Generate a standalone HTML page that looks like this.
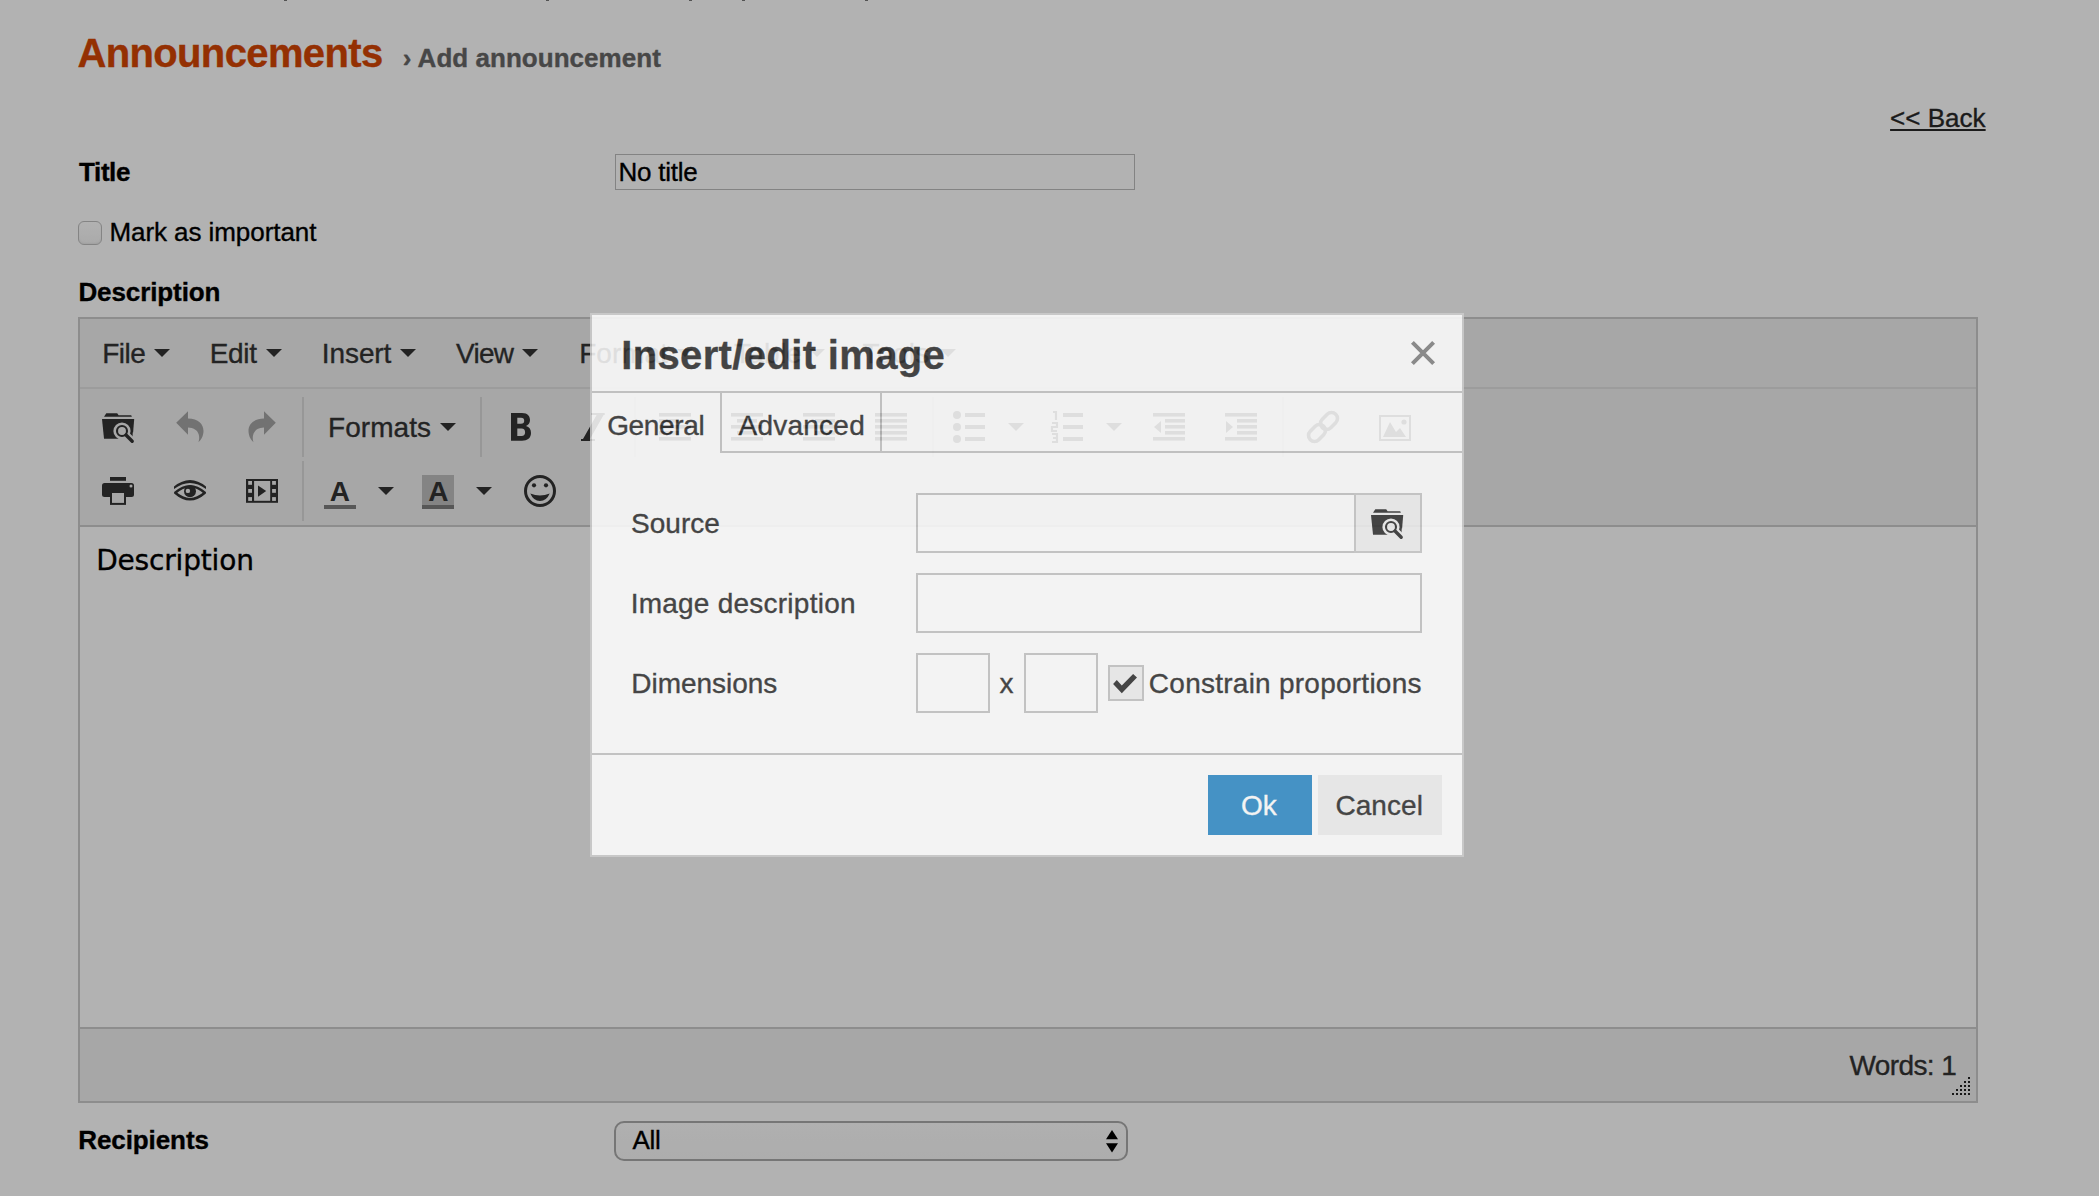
<!DOCTYPE html>
<html lang="en"><head><meta charset="utf-8"><title>Announcements - Add announcement</title>
<style>
html,body{margin:0;padding:0}
body{width:2099px;height:1196px;overflow:hidden;background:#fff;position:relative;font-family:"Liberation Sans",sans-serif}
.t{position:absolute;white-space:nowrap;margin:0;-webkit-text-stroke:0.35px currentColor}
.b{position:absolute;box-sizing:border-box}
.i{position:absolute;overflow:visible}
#page,#overlay{position:absolute;left:0;top:0;width:2099px;height:1196px}
#overlay{background:rgba(0,0,0,0.3)}
#dlg{position:absolute;left:590px;top:313px;width:874px;height:544px;box-sizing:border-box;border:2px solid #ccc;background:#fff;opacity:0.85;}
</style></head>
<body>
<div id="page">
<div class="b" style="left:284px;top:0px;width:3px;height:1px;background:#777;"></div>
<div class="b" style="left:546px;top:0px;width:3px;height:1px;background:#777;"></div>
<div class="b" style="left:689px;top:0px;width:3px;height:1px;background:#777;"></div>
<div class="b" style="left:742px;top:0px;width:3px;height:1px;background:#777;"></div>
<div class="b" style="left:865px;top:0px;width:3px;height:1px;background:#777;"></div>
<div class="b" style="left:615px;top:154px;width:520px;height:36px;border:1px solid #bcbcbc;background:#fff;"></div>
<div class="b" style="left:78px;top:221px;width:24px;height:24px;border:1.5px solid #bdbdbd;border-radius:6px;background:linear-gradient(#fff,#f3f3f3);box-shadow:inset 0 -1px 2px rgba(0,0,0,0.06);"></div>
<div class="b" style="left:78px;top:317px;width:1900px;height:786px;border:2px solid #cbcbcb;background:#fff;"></div>
<div class="b" style="left:80px;top:319px;width:1896px;height:68px;background:#f0f0f0;"></div>
<div class="b" style="left:80px;top:387px;width:1896px;height:2px;background:#e0e0e0;"></div>
<div class="b" style="left:80px;top:389px;width:1896px;height:136px;background:#f0f0f0;"></div>
<div class="b" style="left:80px;top:525px;width:1896px;height:2px;background:#cbcbcb;"></div>
<div class="b" style="left:80px;top:1027px;width:1896px;height:2px;background:#cbcbcb;"></div>
<div class="b" style="left:80px;top:1029px;width:1896px;height:72px;background:#f0f0f0;"></div>
<div class="b" style="left:302px;top:397px;width:2px;height:60px;background:#d9d9d9;"></div>
<div class="b" style="left:302px;top:461px;width:2px;height:60px;background:#d9d9d9;"></div>
<div class="b" style="left:480px;top:397px;width:2px;height:60px;background:#d9d9d9;"></div>
<div class="b" style="left:634px;top:397px;width:2px;height:60px;background:#d9d9d9;"></div>
<div class="b" style="left:932px;top:397px;width:2px;height:60px;background:#d9d9d9;"></div>
<div class="b" style="left:1282px;top:397px;width:2px;height:60px;background:#d9d9d9;"></div>
<svg class="i" style="left:154px;top:349px" width="16" height="8" viewBox="0 0 16 8" ><polygon points="0,0 16,0 8,8" fill="#333"/></svg>
<svg class="i" style="left:266px;top:349px" width="16" height="8" viewBox="0 0 16 8" ><polygon points="0,0 16,0 8,8" fill="#333"/></svg>
<svg class="i" style="left:400px;top:349px" width="16" height="8" viewBox="0 0 16 8" ><polygon points="0,0 16,0 8,8" fill="#333"/></svg>
<svg class="i" style="left:522px;top:349px" width="16" height="8" viewBox="0 0 16 8" ><polygon points="0,0 16,0 8,8" fill="#333"/></svg>
<svg class="i" style="left:677px;top:349px" width="16" height="8" viewBox="0 0 16 8" ><polygon points="0,0 16,0 8,8" fill="#333"/></svg>
<svg class="i" style="left:809px;top:349px" width="16" height="8" viewBox="0 0 16 8" ><polygon points="0,0 16,0 8,8" fill="#333"/></svg>
<svg class="i" style="left:940px;top:349px" width="16" height="8" viewBox="0 0 16 8" ><polygon points="0,0 16,0 8,8" fill="#333"/></svg>
<svg class="i" style="left:102px;top:411px" width="32" height="32" viewBox="0 0 32 32" ><path fill="#333" d="M2,5.7 L4.3,2.2 H15.2 L16.6,4.3 H29.2 L29.9,5.7 Z"/><path fill="#333" d="M0,8 H32.2 L30.6,27.7 H2 Z"/><circle cx="20" cy="20" r="8.6" fill="#f0f0f0"/><path d="M24,24 L31,31" stroke="#f0f0f0" stroke-width="7.5" stroke-linecap="round"/><rect x="30.7" y="21.5" width="3" height="12" fill="#f0f0f0"/><circle cx="20" cy="20" r="5" fill="none" stroke="#333" stroke-width="2.1"/><path d="M24,24 L30.2,30.2" stroke="#333" stroke-width="3.4" stroke-linecap="round"/></svg>
<svg class="i" style="left:174px;top:411px" width="32" height="32" viewBox="0 0 32 32" ><path fill="#333" opacity="0.4" d="M2.2,11.8 L14,0.3 V7.6 C24.5,7.6 29.5,13.5 29.5,20 C29.5,25 27,29 24.5,31.2 C26.5,26 25,16.8 14,16.6 V23.8 Z"/></svg>
<svg class="i" style="left:246px;top:411px" width="32" height="32" viewBox="0 0 32 32" ><g transform="translate(32,0) scale(-1,1)"><path fill="#333" opacity="0.4" d="M2.2,11.8 L14,0.3 V7.6 C24.5,7.6 29.5,13.5 29.5,20 C29.5,25 27,29 24.5,31.2 C26.5,26 25,16.8 14,16.6 V23.8 Z"/></g></svg>
<svg class="i" style="left:440px;top:423px" width="16" height="8" viewBox="0 0 16 8" ><polygon points="0,0 16,0 8,8" fill="#333"/></svg>
<svg class="i" style="left:510.7px;top:413.3px" width="20" height="28" viewBox="0 0 20 28" ><path fill="#333" fill-rule="evenodd" d="M0,0 H11 C17,0 19,3.5 19,7 C19,10 17.5,12 15,13 C18.5,14 20,16.5 20,20 C20,25 16.5,27.7 11,27.7 H0 Z M6.3,4.7 V10.8 H10 C12.3,10.8 13.2,9.5 13.2,7.7 C13.2,5.8 12.3,4.7 10,4.7 Z M6.3,15.5 V23 H10.5 C13,23 14.1,21.5 14.1,19.2 C14.1,16.9 13,15.5 10.5,15.5 Z"/></svg>
<svg class="i" style="left:577px;top:411px" width="32" height="32" viewBox="0 0 32 32" ><path fill="#333" d="M14,2 H27.7 V4 H26.6 L13,28 H18 V30 H4 V28 H6 L19.6,4 H14 Z"/></svg>
<svg class="i" style="left:659px;top:411px" width="32" height="32" viewBox="0 0 32 32" ><rect x="0" y="2" width="32" height="3.6" fill="#333"/><rect x="0" y="8" width="20" height="3.6" fill="#333"/><rect x="0" y="14" width="32" height="3.6" fill="#333"/><rect x="0" y="20" width="20" height="3.6" fill="#333"/><rect x="0" y="26" width="32" height="3.6" fill="#333"/></svg>
<svg class="i" style="left:731px;top:411px" width="32" height="32" viewBox="0 0 32 32" ><rect x="0.0" y="2" width="32" height="3.6" fill="#333"/><rect x="6.0" y="8" width="20" height="3.6" fill="#333"/><rect x="0.0" y="14" width="32" height="3.6" fill="#333"/><rect x="6.0" y="20" width="20" height="3.6" fill="#333"/><rect x="0.0" y="26" width="32" height="3.6" fill="#333"/></svg>
<svg class="i" style="left:803px;top:411px" width="32" height="32" viewBox="0 0 32 32" ><rect x="0" y="2" width="32" height="3.6" fill="#333"/><rect x="12" y="8" width="20" height="3.6" fill="#333"/><rect x="0" y="14" width="32" height="3.6" fill="#333"/><rect x="12" y="20" width="20" height="3.6" fill="#333"/><rect x="0" y="26" width="32" height="3.6" fill="#333"/></svg>
<svg class="i" style="left:875px;top:411px" width="32" height="32" viewBox="0 0 32 32" ><rect x="0" y="2" width="32" height="3.6" fill="#333"/><rect x="0" y="8" width="32" height="3.6" fill="#333"/><rect x="0" y="14" width="32" height="3.6" fill="#333"/><rect x="0" y="20" width="32" height="3.6" fill="#333"/><rect x="0" y="26" width="32" height="3.6" fill="#333"/></svg>
<svg class="i" style="left:953px;top:411px" width="32" height="32" viewBox="0 0 32 32" ><circle cx="4" cy="4" r="4" fill="#333"/><rect x="12" y="2" width="20" height="4" fill="#333"/><circle cx="4" cy="16" r="4" fill="#333"/><rect x="12" y="14" width="20" height="4" fill="#333"/><circle cx="4" cy="28" r="4" fill="#333"/><rect x="12" y="26" width="20" height="4" fill="#333"/></svg>
<svg class="i" style="left:1008px;top:423px" width="16" height="8" viewBox="0 0 16 8" ><polygon points="0,0 16,0 8,8" fill="#333"/></svg>
<svg class="i" style="left:1051px;top:411px" width="32" height="32" viewBox="0 0 32 32" ><rect x="12" y="2" width="20" height="4" fill="#333"/><rect x="12" y="14" width="20" height="4" fill="#333"/><rect x="12" y="26" width="20" height="4" fill="#333"/><path d="M2,1 H5 V9 M1,12 H6 V16 H1 V20 H6 M1,23 H6 V31 H1 M2,27 H6" stroke="#333" stroke-width="2.2" fill="none"/></svg>
<svg class="i" style="left:1106px;top:423px" width="16" height="8" viewBox="0 0 16 8" ><polygon points="0,0 16,0 8,8" fill="#333"/></svg>
<svg class="i" style="left:1153px;top:411px" width="32" height="32" viewBox="0 0 32 32" ><rect x="0" y="2" width="32" height="3.6" fill="#333"/><rect x="0" y="26" width="32" height="3.6" fill="#333"/><rect x="12" y="8" width="20" height="3.6" fill="#333"/><rect x="12" y="14" width="20" height="3.6" fill="#333"/><rect x="12" y="20" width="20" height="3.6" fill="#333"/><polygon points="8,10 8,22 1,16" fill="#333"/></svg>
<svg class="i" style="left:1225px;top:411px" width="32" height="32" viewBox="0 0 32 32" ><rect x="0" y="2" width="32" height="3.6" fill="#333"/><rect x="0" y="26" width="32" height="3.6" fill="#333"/><rect x="12" y="8" width="20" height="3.6" fill="#333"/><rect x="12" y="14" width="20" height="3.6" fill="#333"/><rect x="12" y="20" width="20" height="3.6" fill="#333"/><polygon points="1,10 1,22 8,16" fill="#333"/></svg>
<svg class="i" style="left:1307px;top:411px" width="32" height="32" viewBox="0 0 32 32" ><g fill="none" stroke="#333" stroke-width="3.6" stroke-linecap="round" transform="rotate(-45 16 16)"><rect x="-2" y="10" width="19" height="12" rx="6"/><rect x="15" y="10" width="19" height="12" rx="6"/></g></svg>
<svg class="i" style="left:1379px;top:411px" width="32" height="32" viewBox="0 0 32 32" ><rect x="1" y="5" width="30" height="24" fill="none" stroke="#333" stroke-width="2"/><polygon points="4,26 11,11 17,21 21,17 27,26" fill="#333"/><circle cx="25" cy="11" r="2.6" fill="#333"/></svg>
<svg class="i" style="left:102px;top:475px" width="32" height="32" viewBox="0 0 32 32" ><rect x="8" y="2" width="16" height="3.8" fill="#333"/><rect x="0" y="8" width="32" height="14" rx="2.5" fill="#333"/><rect x="8" y="17" width="16" height="12.9" fill="#333"/><rect x="10" y="18" width="12" height="9.9" fill="#f0f0f0"/><circle cx="29" cy="11.1" r="1.5" fill="#f0f0f0"/></svg>
<svg class="i" style="left:174px;top:475px" width="32" height="32" viewBox="0 0 32 32" ><path d="M0,11.6 Q16,-1.4 32,11.6 L32,13.9 Q16,1.9 0,13.9 Z" fill="#333"/><path d="M1.2,17.8 Q16,4.7 30.8,17.8 Q16,30.7 1.2,17.8 Z" fill="none" stroke="#333" stroke-width="2.5" stroke-linejoin="round"/><circle cx="16" cy="16.2" r="6" fill="#333"/><circle cx="13.9" cy="15.9" r="2.2" fill="#f0f0f0"/></svg>
<svg class="i" style="left:246px;top:475px" width="32" height="32" viewBox="0 0 32 32" ><rect x="0" y="4" width="32" height="23.8" fill="#333"/><rect x="8.1" y="6" width="16.1" height="19.8" fill="#f0f0f0"/><rect x="2.2" y="6" width="3.8" height="3.8" fill="#f0f0f0"/><rect x="2.2" y="14" width="3.8" height="3.8" fill="#f0f0f0"/><rect x="2.2" y="22.1" width="3.8" height="3.8" fill="#f0f0f0"/><rect x="26.1" y="6" width="3.8" height="3.8" fill="#f0f0f0"/><rect x="26.1" y="14" width="3.8" height="3.8" fill="#f0f0f0"/><rect x="26.1" y="22.1" width="3.8" height="3.8" fill="#f0f0f0"/><polygon points="12,10.4 20.2,16 12,21.7" fill="#333"/></svg>
<div class="b" style="left:324px;top:505px;width:32px;height:4px;background:#7d7d7d;"></div>
<svg class="i" style="left:378px;top:487px" width="16" height="8" viewBox="0 0 16 8" ><polygon points="0,0 16,0 8,8" fill="#333"/></svg>
<div class="b" style="left:422px;top:475px;width:32px;height:34px;background:#bdbdbd;"></div>
<div class="b" style="left:422px;top:505px;width:32px;height:4px;background:#7d7d7d;"></div>
<svg class="i" style="left:476px;top:487px" width="16" height="8" viewBox="0 0 16 8" ><polygon points="0,0 16,0 8,8" fill="#333"/></svg>
<svg class="i" style="left:524px;top:475px" width="32" height="32" viewBox="0 0 32 32" ><circle cx="16" cy="16" r="14.5" fill="none" stroke="#333" stroke-width="3"/><circle cx="10" cy="10.3" r="2.1" fill="#333"/><circle cx="22" cy="10.3" r="2.1" fill="#333"/><path d="M6.3,18.5 Q16,22.5 25.7,18.5 Q22.5,26 16,26 Q9.5,26 6.3,18.5 Z" fill="#333"/></svg>
<svg class="i" style="left:1952px;top:1077px" width="18" height="18" viewBox="0 0 18 18" ><rect x="16" y="0" width="2" height="2" fill="#222"/><rect x="12" y="4" width="2" height="2" fill="#222"/><rect x="16" y="4" width="2" height="2" fill="#222"/><rect x="8" y="8" width="2" height="2" fill="#222"/><rect x="12" y="8" width="2" height="2" fill="#222"/><rect x="16" y="8" width="2" height="2" fill="#222"/><rect x="4" y="12" width="2" height="2" fill="#222"/><rect x="8" y="12" width="2" height="2" fill="#222"/><rect x="12" y="12" width="2" height="2" fill="#222"/><rect x="16" y="12" width="2" height="2" fill="#222"/><rect x="0" y="16" width="2" height="2" fill="#222"/><rect x="4" y="16" width="2" height="2" fill="#222"/><rect x="8" y="16" width="2" height="2" fill="#222"/><rect x="12" y="16" width="2" height="2" fill="#222"/><rect x="16" y="16" width="2" height="2" fill="#222"/></svg>
<div class="b" style="left:614px;top:1121px;width:514px;height:40px;border:2px solid #a9a9a9;border-radius:10px;background:linear-gradient(#fcfcfc,#f8f8f8);"></div>
<svg class="i" style="left:1105px;top:1130px" width="14" height="23" viewBox="0 0 14 23" ><polygon points="1,9.3 7,0 13,9.3" fill="#000"/><polygon points="1,13.2 7,22.5 13,13.2" fill="#000"/></svg>
<h1 class="t" style='left:77.40px;top:33px;font:bold 40px/40px "Liberation Sans", sans-serif;color:#d54503;letter-spacing:-0.630px;'>Announcements</h1>
<div class="t" style='left:402.65px;top:45px;font:bold 26px/26px "Liberation Sans", sans-serif;color:#666;letter-spacing:0.033px;'>› Add announcement</div>
<a class="t" style='left:1890.09px;top:105px;font:normal 26px/26px "Liberation Sans", sans-serif;color:#282828;letter-spacing:0.024px;text-decoration:underline;text-decoration-thickness:2px;text-underline-offset:2px;'>&lt;&lt; Back</a>
<label class="t" style='left:79.11px;top:159px;font:bold 26px/26px "Liberation Sans", sans-serif;color:#000;letter-spacing:-0.429px;'>Title</label>
<div class="t" style='left:618.51px;top:159px;font:normal 26px/26px "Liberation Sans", sans-serif;color:#000;letter-spacing:-0.251px;'>No title</div>
<label class="t" style='left:109.41px;top:219px;font:normal 26px/26px "Liberation Sans", sans-serif;color:#000;letter-spacing:-0.065px;'>Mark as important</label>
<label class="t" style='left:78.41px;top:279px;font:bold 26px/26px "Liberation Sans", sans-serif;color:#000;letter-spacing:-0.096px;'>Description</label>
<label class="t" style='left:78.21px;top:1127px;font:bold 26px/26px "Liberation Sans", sans-serif;color:#000;letter-spacing:-0.086px;'>Recipients</label>
<div class="t" style='left:632.44px;top:1127px;font:normal 26px/26px "Liberation Sans", sans-serif;color:#000;letter-spacing:-0.313px;'>All</div>
<div class="t" style='left:102.21px;top:340px;font:normal 28px/28px "Liberation Sans", sans-serif;color:#333;letter-spacing:-0.541px;'>File</div>
<div class="t" style='left:209.71px;top:340px;font:normal 28px/28px "Liberation Sans", sans-serif;color:#333;letter-spacing:-0.299px;'>Edit</div>
<div class="t" style='left:321.85px;top:340px;font:normal 28px/28px "Liberation Sans", sans-serif;color:#333;letter-spacing:-0.106px;'>Insert</div>
<div class="t" style='left:456.00px;top:340px;font:normal 28px/28px "Liberation Sans", sans-serif;color:#333;letter-spacing:-0.733px;'>View</div>
<div class="t" style='left:579.31px;top:340px;font:normal 28px/28px "Liberation Sans", sans-serif;color:#333;letter-spacing:-0.043px;'>Format</div>
<div class="t" style='left:733.98px;top:340px;font:normal 28px/28px "Liberation Sans", sans-serif;color:#333;letter-spacing:0.260px;'>Table</div>
<div class="t" style='left:862.58px;top:340px;font:normal 28px/28px "Liberation Sans", sans-serif;color:#333;letter-spacing:0.345px;'>Tools</div>
<div class="t" style='left:328.06px;top:414px;font:normal 28px/28px "Liberation Sans", sans-serif;color:#333;letter-spacing:0.053px;'>Formats</div>
<div class="t" style='left:1849.42px;top:1052px;font:normal 28px/28px "Liberation Sans", sans-serif;color:#333;letter-spacing:-0.596px;'>Words: 1</div>
<div class="t" style='left:96.18px;top:547px;font:normal 28px/28px "DejaVu Sans", sans-serif;color:#000;letter-spacing:-0.170px;'>Description</div>
<div class="t" style='left:329.86px;top:478px;font:bold 28px/28px "Liberation Sans", sans-serif;color:#333;letter-spacing:0.000px;-webkit-text-stroke:0;'>A</div>
<div class="t" style='left:428.16px;top:478px;font:bold 28px/28px "Liberation Sans", sans-serif;color:#333;letter-spacing:0.000px;-webkit-text-stroke:0;'>A</div>
</div>
<div id="overlay"></div>
<div id="dlg">
<div class="b" style="left:0px;top:76px;width:870px;height:2px;background:#c5c5c5;"></div>
<div class="b" style="left:128px;top:78px;width:2px;height:60px;background:#c5c5c5;"></div>
<div class="b" style="left:288px;top:78px;width:2px;height:60px;background:#c5c5c5;"></div>
<div class="b" style="left:128px;top:136px;width:742px;height:2px;background:#c5c5c5;"></div>
<svg class="i" style="left:819px;top:26px" width="24" height="24" viewBox="0 0 24 24" ><path d="M1.4,1.4 L22.6,22.6 M22.6,1.4 L1.4,22.6" stroke="#858585" stroke-width="4" fill="none"/></svg>
<div class="b" style="left:324px;top:178px;width:440px;height:60px;border:2px solid #c5c5c5;background:#fff;"></div>
<div class="b" style="left:762px;top:178px;width:68px;height:60px;border:2px solid #c9c9c9;background:#f0f0f0;"></div>
<svg class="i" style="left:779px;top:192px" width="32" height="32" viewBox="0 0 32 32" ><path fill="#333" d="M2,5.7 L4.3,2.2 H15.2 L16.6,4.3 H29.2 L29.9,5.7 Z"/><path fill="#333" d="M0,8 H32.2 L30.6,27.7 H2 Z"/><circle cx="20" cy="20" r="8.6" fill="#f0f0f0"/><path d="M24,24 L31,31" stroke="#f0f0f0" stroke-width="7.5" stroke-linecap="round"/><rect x="30.7" y="21.5" width="3" height="12" fill="#f0f0f0"/><circle cx="20" cy="20" r="5" fill="none" stroke="#333" stroke-width="2.1"/><path d="M24,24 L30.2,30.2" stroke="#333" stroke-width="3.4" stroke-linecap="round"/></svg>
<div class="b" style="left:324px;top:258px;width:506px;height:60px;border:2px solid #c5c5c5;background:#fff;"></div>
<div class="b" style="left:324px;top:338px;width:74px;height:60px;border:2px solid #c5c5c5;background:#fff;"></div>
<div class="b" style="left:432px;top:338px;width:74px;height:60px;border:2px solid #c5c5c5;background:#fff;"></div>
<div class="b" style="left:516px;top:350px;width:36px;height:36px;border:2px solid #c5c5c5;background:#f0f0f0;"></div>
<svg class="i" style="left:521px;top:358px" width="25" height="21" viewBox="0 0 25 21" ><path d="M0.1,11 L3.8,7.1 L8.8,12.6 L20.1,0.9 L24,4.5 L8.8,20.2 Z" fill="#333"/></svg>
<div class="b" style="left:0px;top:438px;width:870px;height:2px;background:#c5c5c5;"></div>
<div class="b" style="left:616px;top:460px;width:104px;height:60px;background:#328dc9;"></div>
<div class="b" style="left:726px;top:460px;width:124px;height:60px;background:#f0f0f0;"></div>
<div class="t" style='left:29.22px;top:20px;font:bold 40px/40px "Liberation Sans", sans-serif;color:#333;letter-spacing:0.359px;'>Insert/edit image</div>
<div class="t" style='left:15.17px;top:97px;font:normal 28px/28px "Liberation Sans", sans-serif;color:#333;letter-spacing:-0.357px;'>General</div>
<div class="t" style='left:146.62px;top:97px;font:normal 28px/28px "Liberation Sans", sans-serif;color:#333;letter-spacing:0.223px;'>Advanced</div>
<label class="t" style='left:39.09px;top:195px;font:normal 28px/28px "Liberation Sans", sans-serif;color:#333;letter-spacing:0.002px;'>Source</label>
<label class="t" style='left:38.65px;top:275px;font:normal 28px/28px "Liberation Sans", sans-serif;color:#333;letter-spacing:0.242px;'>Image description</label>
<label class="t" style='left:39.31px;top:355px;font:normal 28px/28px "Liberation Sans", sans-serif;color:#333;letter-spacing:-0.033px;'>Dimensions</label>
<div class="t" style='left:407.47px;top:355px;font:normal 28px/28px "Liberation Sans", sans-serif;color:#333;letter-spacing:0.000px;'>x</div>
<label class="t" style='left:556.86px;top:355px;font:normal 28px/28px "Liberation Sans", sans-serif;color:#333;letter-spacing:0.247px;'>Constrain proportions</label>
<div class="t" style='left:649.03px;top:477px;font:normal 28px/28px "Liberation Sans", sans-serif;color:#fff;letter-spacing:-0.052px;'>Ok</div>
<div class="t" style='left:743.46px;top:477px;font:normal 28px/28px "Liberation Sans", sans-serif;color:#333;letter-spacing:0.053px;'>Cancel</div>
</div>
</body></html>
